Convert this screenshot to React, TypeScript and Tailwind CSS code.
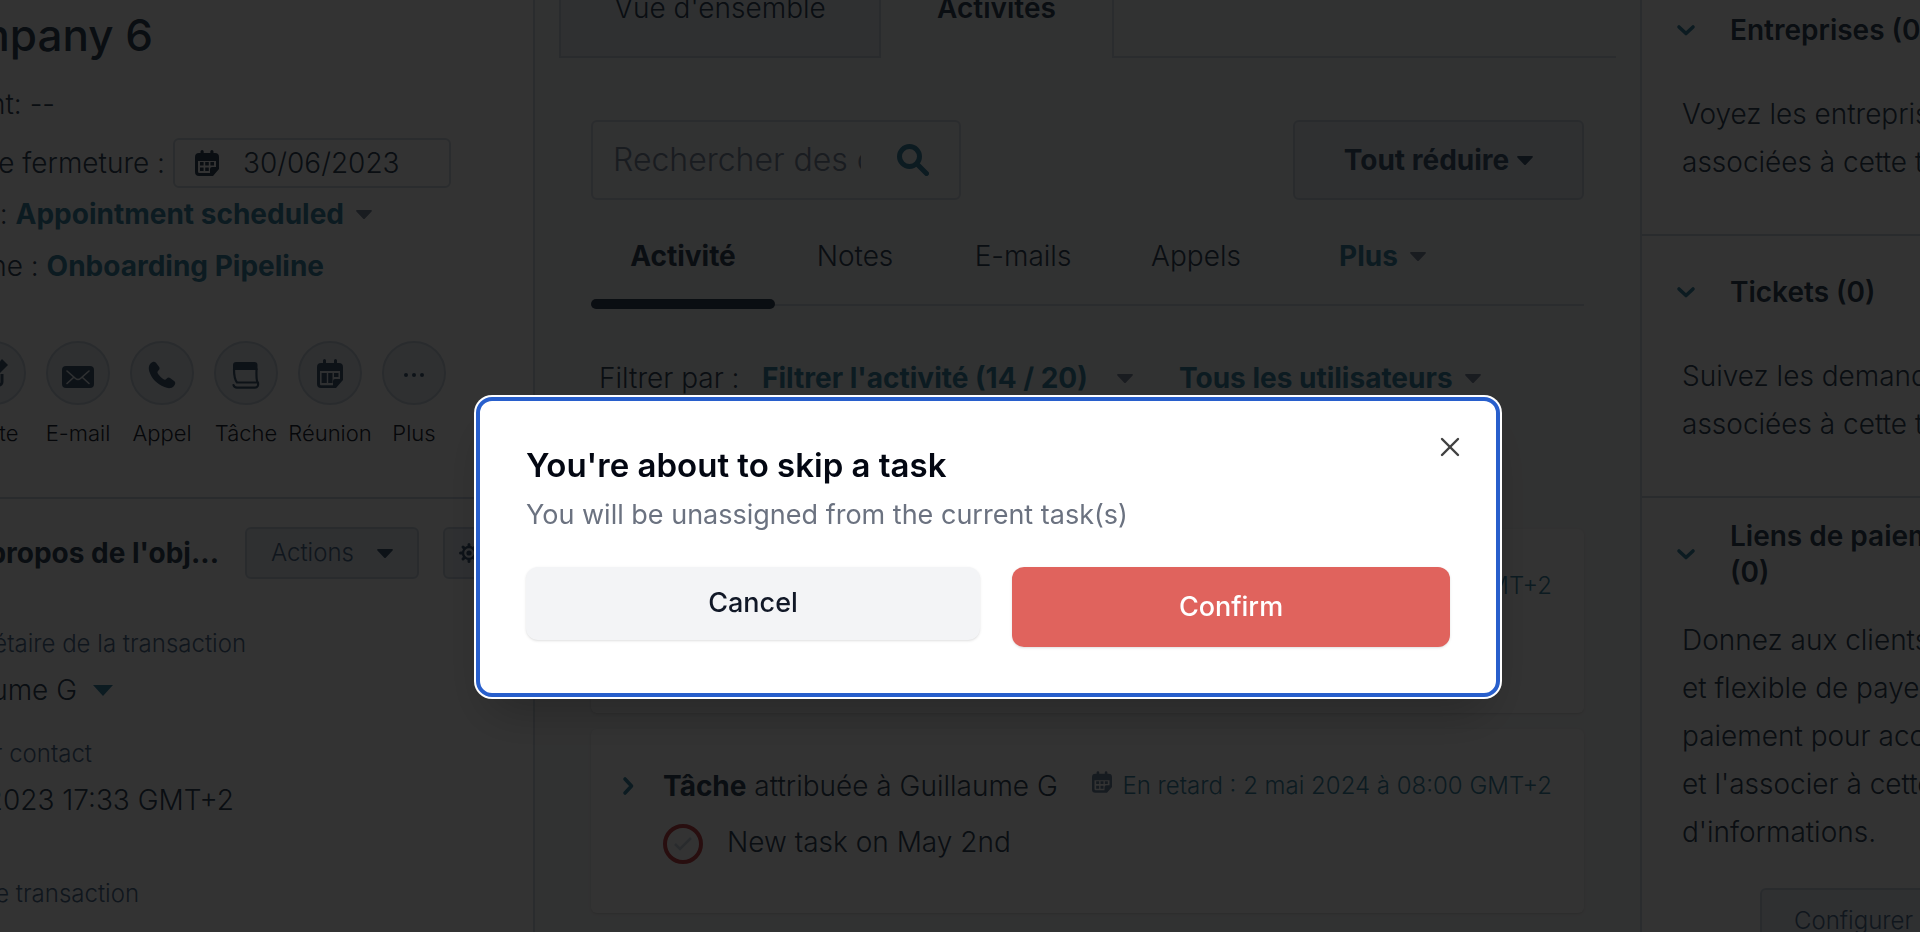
import type { ReactNode } from 'react';
import { X } from 'lucide-react';

function Caret({ className = '' }: { className?: string }) {
  return (
    <svg viewBox="0 0 16 9" className={`h-[9px] w-4 shrink-0 ${className}`} fill="currentColor" aria-hidden="true">
      <path d="M1 0h14c.9 0 1.200.9.6 1.500L9 8.400a1.400 1.400 0 0 1-2 0L.4 1.500C-.2.9.1 0 1 0z" />
    </svg>
  );
}

function Chevron({ right = false }: { right?: boolean }) {
  return (
    <svg
      viewBox="0 0 20 20"
      className={`size-5 shrink-0 text-[#3c87a5] ${right ? '-rotate-90' : ''}`}
      fill="none"
      stroke="currentColor"
      strokeWidth="3.600"
      strokeLinecap="round"
      strokeLinejoin="round"
      aria-hidden="true"
    >
      <path d="M3 7l7 6.500L17 7" />
    </svg>
  );
}

function CalendarDots({ className }: { className: string }) {
  return (
    <svg viewBox="0 0 24 26" className={className} aria-hidden="true">
      <path
        fill="currentColor"
        fillRule="evenodd"
        d="M5.500 1.600a1.600 1.600 0 0 1 3.200 0V3h6.600V1.600a1.600 1.600 0 0 1 3.200 0V3H20a4 4 0 0 1 4 4v12l-6 7H4a4 4 0 0 1-4-4V7a4 4 0 0 1 4-4h1.500zM3 11v10.500A1.500 1.500 0 0 0 4.500 23H15v-4a2 2 0 0 1 2-2h4v-6z"
      />
      <path fill="currentColor" d="M5 12h3.600v3.400H5zM10.200 12h3.600v3.400h-3.600zM15.400 12H19v3.400h-3.600zM5 17.500h3.600V21H5zM10.200 17.500h3.600V21h-3.600z" />
    </svg>
  );
}

function NoteIcon() {
  return (
    <svg viewBox="0 0 32 32" className="size-8" aria-hidden="true">
      <path fill="none" stroke="currentColor" strokeWidth="3" d="M14 6H7a3 3 0 0 0-3 3v16a3 3 0 0 0 3 3h14a3 3 0 0 0 3-3v-8" />
      <path fill="currentColor" d="M24 2l6 6-13 13-7 2 2-8z" />
    </svg>
  );
}

function MailIcon() {
  return (
    <svg viewBox="0 0 32 22" className="mt-2 h-[22px] w-8" aria-hidden="true">
      <rect width="32" height="22" rx="4" fill="currentColor" />
      <path d="M5 5l8.500 7.500a4 4 0 0 0 5 0L27 5M5 17.500l6.500-6M27 17.500l-6.500-6" fill="none" stroke="#eaf0f6" strokeWidth="1.600" strokeLinecap="round" />
    </svg>
  );
}

function PhoneIcon() {
  return (
    <svg viewBox="0 0 28 28" className="mt-1 size-7" aria-hidden="true">
      <path
        fill="currentColor"
        d="M2.500 2.600C4.500.6 6.500.2 8 1.800l3 4c1 1.500.7 2.600-.6 3.800-1.400 1.300-1.200 2 .1 3.900 1.300 1.900 2.900 3.400 4.600 4.500 1.600 1 2.300 1 3.400-.2 1.300-1.400 2.400-1.600 3.900-.6l3.700 2.700c1.700 1.400 1.500 3.100-.1 5-2.200 2.600-5.600 2.900-9.600 1.200C8.700 22.900 3.600 17.500 1.300 10.500.3 7.300.7 4.400 2.500 2.600z"
      />
    </svg>
  );
}

function TaskIcon() {
  return (
    <svg viewBox="0 0 28 28" className="mt-1 size-7" fill="none" stroke="currentColor" strokeWidth="2.200" strokeLinejoin="round" aria-hidden="true">
      <path d="M2 8C2 14 3 19 5 21.500h20.500C24 18 24.500 12 24.500 8z" />
      <path d="M1 4a3 3 0 0 1 3-3h18.500a3 3 0 0 1 3 3v5H1z" fill="currentColor" stroke="none" />
      <path d="M1.500 24c.5 2 1.500 2.600 3.500 2.600h18c2.500 0 3.500-2 3-5" strokeLinecap="round" />
    </svg>
  );
}

function MeetingIcon() {
  return (
    <svg viewBox="0 0 26 29" className="h-[29px] w-[26px]" aria-hidden="true">
      <path
        fill="currentColor"
        fillRule="evenodd"
        d="M6 1.500a1.500 1.500 0 0 1 3 0V4h8V1.500a1.500 1.500 0 0 1 3 0V4h2a4 4 0 0 1 4 4v13l-7 8H4a4 4 0 0 1-4-4V8a4 4 0 0 1 4-4h2zM3 12v13c0 .8.5 1.300 1.300 1.300H16V22a2 2 0 0 1 2-2h5v-8z"
      />
      <path fill="currentColor" d="M4.600 14h5.200v10H4.600zM11.200 14h4.300v10h-4.300zM17 14h4.500v4H17z" />
    </svg>
  );
}

function DotsIcon() {
  return (
    <svg viewBox="0 0 22 6" className="mt-1 h-[6px] w-[22px]" fill="currentColor" aria-hidden="true">
      <circle cx="3" cy="3" r="2" />
      <circle cx="11" cy="3" r="2" />
      <circle cx="19" cy="3" r="2" />
    </svg>
  );
}

function GearIcon() {
  return (
    <svg viewBox="0 0 20 20" className="size-5" fill="none" stroke="currentColor" aria-hidden="true">
      <circle cx="10" cy="10" r="6" strokeWidth="2.400" />
      <circle cx="10" cy="10" r="2.600" fill="currentColor" stroke="none" />
      <path strokeWidth="3" strokeLinecap="round" d="M10 1.500v2M10 16.500v2M1.500 10h2M16.500 10h2M4 4l1.400 1.400M14.600 14.600L16 16M4 16l1.400-1.400M14.600 5.400L16 4" />
    </svg>
  );
}

const actions: { label: string; icon: ReactNode }[] = [
  { label: 'Note', icon: <NoteIcon /> },
  { label: 'E-mail', icon: <MailIcon /> },
  { label: 'Appel', icon: <PhoneIcon /> },
  { label: 'Tâche', icon: <TaskIcon /> },
  { label: 'Réunion', icon: <MeetingIcon /> },
  { label: 'Plus', icon: <DotsIcon /> },
];

function LeftPanel() {
  return (
    <aside className="w-[535px] shrink-0 overflow-hidden border-r-2 border-[#d2dae4] bg-white pt-3">
      <div className="flex w-[451px] flex-col items-end whitespace-nowrap">
        <h1 className="mr-[298px] text-[44px] leading-[46px] font-medium">Company 6</h1>
        <p className="mt-7 mr-[396px] leading-9">Montant: --</p>
        <div className="mt-4 flex items-center gap-2">
          <label htmlFor="close-date">Date de fermeture :</label>
          <div className="flex h-[50px] w-[278px] items-center gap-6 rounded-md border-2 border-[#d2dae4] pl-5">
            <CalendarDots className="h-[26px] w-6 shrink-0" />
            <input id="close-date" defaultValue="30/06/2023" className="w-44 outline-none" />
          </div>
        </div>
        <div className="mt-2 mr-[79px] flex h-9 items-center gap-3">
          <span>Phase : <a href="#phase" className="font-bold text-[#3c87a5]">Appointment scheduled</a></span>
          <Caret className="text-[#7c8aa0]" />
        </div>
        <p className="mt-4 mr-[127px] leading-9">
          Pipeline : <a href="#pipeline" className="font-bold text-[#3c87a5]">Onboarding Pipeline</a>
        </p>
      </div>

      <div className="mt-[57px] -ml-12 flex">
        {actions.map((a) => (
          <button key={a.label} className="flex w-[84px] shrink-0 flex-col items-center">
            <span className="flex size-16 items-center justify-center rounded-full border-2 border-[#cbd6e2] bg-[#eaf0f6] text-[#425b76]">
              {a.icon}
            </span>
            <span className="mt-3 text-[22px] leading-8 text-[#1b2733]">{a.label}</span>
          </button>
        ))}
      </div>

      <div className="mt-12 flex items-center border-t-2 border-[#cbd6e2] pt-7">
        <div className="flex w-[219px] shrink-0 justify-end whitespace-nowrap">
          <h2 className="font-bold">À propos de l'obj...</h2>
        </div>
        <button className="ml-[26px] flex h-[52px] w-[174px] shrink-0 items-center justify-between rounded-md border-2 border-[#cbd6e2] bg-[#eaf0f6] px-6 text-2xl text-[#516f90]">
          Actions <Caret className="text-[#425b76]" />
        </button>
        <button aria-label="Paramètres" className="ml-6 flex h-[52px] w-[72px] shrink-0 items-center rounded-md border-2 border-[#cbd6e2] bg-[#eaf0f6] pl-[14px] text-[#425b76]">
          <GearIcon />
        </button>
      </div>

      <dl className="flex w-[246px] flex-col items-end whitespace-nowrap">
        <dt className="mt-[49px] text-2xl leading-8 text-[#516f90]">Propriétaire de la transaction</dt>
        <dd className="mt-3 mr-[133px] flex h-9 items-center gap-4">
          Guillaume G
          <svg viewBox="0 0 20 11" className="h-[11px] w-5 text-[#3c87a5]" fill="currentColor" aria-hidden="true">
            <path d="M0 0h20L10 11z" />
          </svg>
        </dd>
        <dt className="mt-[30px] mr-[154px] text-2xl leading-8 text-[#516f90]">Dernier contact</dt>
        <dd className="mt-3 mr-3 leading-9">30/06/2023 17:33 GMT+2</dd>
        <dt className="mt-[60px] mr-[107px] text-2xl leading-8 text-[#516f90]">Type de transaction</dt>
      </dl>
    </aside>
  );
}

function DueDate() {
  return (
    <a href="#due" className="block text-2xl font-light text-[#3c87a5]">En retard : 2 mai 2024 à 08:00 GMT+2</a>
  );
}

function TaskCard({ children }: { children: ReactNode }) {
  return <article className="h-[184px] rounded-md bg-white pt-[39px] pr-8 pl-[27px] whitespace-nowrap shadow-sm">{children}</article>;
}

function MiddlePanel() {
  return (
    <main className="min-w-0 flex-1 overflow-hidden bg-[#f6f7f8]">
      <div className="mx-6 flex h-[58px] items-stretch">
        <button className="flex w-[322px] items-end justify-center border-x-2 border-b-2 border-[#cbd6e2] bg-[#eaf0f6] pb-[30px] leading-9 font-light">
          Vue d'ensemble
        </button>
        <button className="flex w-[231px] items-end justify-center pb-8 leading-9 font-semibold">Activités</button>
        <div className="flex-1 border-b-2 border-l-2 border-[#d2dae4]" />
      </div>
      <div className="px-14 pt-[62px]">
        <div className="flex items-center justify-between">
          <div className="flex h-20 w-[370px] items-center gap-9 rounded-md border-2 border-[#d2dae4] pr-[30px] pl-5">
            <input aria-label="Rechercher" placeholder="Rechercher des contenus" className="w-[248px] min-w-0 text-[32px] font-light outline-none placeholder:text-[#7c8aa0]" />
            <svg viewBox="0 0 32 32" className="size-8 shrink-0 text-[#3c87a5]" fill="none" stroke="currentColor" strokeLinecap="round" aria-hidden="true">
              <circle cx="12.500" cy="12.500" r="10" strokeWidth="5" />
              <path d="M20.500 20.500l9 9" strokeWidth="5" />
            </svg>
          </div>
          <button className="flex h-20 w-[291px] items-center justify-center gap-2 rounded-md border-2 border-[#cbd6e2] bg-[#eaf0f6] font-bold text-[#425b76]">
            Tout réduire <Caret />
          </button>
        </div>

        <nav className="flex border-b-2 border-[#d2dae4]">
          <button className="relative h-[104px] w-[184px] pt-2 font-bold">
            Activité
            <span className="absolute inset-x-0 -bottom-[5px] h-[10px] rounded-full bg-[#33475b]" />
          </button>
          <button className="w-40 pt-2">Notes</button>
          <button className="w-[176px] pt-2">E-mails</button>
          <button className="w-[170px] pt-2">Appels</button>
          <button className="ml-[58px] flex items-center gap-3 pt-2 font-bold text-[#3c87a5]">
            Plus <Caret className="text-[#7c8aa0]" />
          </button>
        </nav>

        <div className="mt-[54px] flex h-9 items-center pl-2 whitespace-nowrap">
          <span className="w-[163px]">Filtrer par :</span>
          <button className="mr-[46px] flex w-[371px] items-center justify-between font-bold text-[#3c87a5]">
            Filtrer l'activité (14 / 20) <Caret className="text-[#7c8aa0]" />
          </button>
          <button className="flex items-center gap-3 font-bold text-[#3c87a5]">
            Tous les utilisateurs <Caret className="text-[#7c8aa0]" />
          </button>
        </div>

        <div className="mt-[133px] flex flex-col gap-4">
          <TaskCard>
            <div className="flex h-9 items-center justify-end">
              <DueDate />
            </div>
          </TaskCard>
          <TaskCard>
            <div className="flex h-9 items-center">
              <Chevron right />
              <p className="ml-[25px]"><b className="font-bold">Tâche</b> attribuée à Guillaume G</p>
              <CalendarDots className="mb-2 ml-auto h-[22px] w-5 text-[#7086a0]" />
              <div className="ml-[10px]">
                <DueDate />
              </div>
            </div>
            <div className="mt-5 ml-[45px] flex h-10 items-center gap-6">
              <button aria-label="Terminer la tâche" className="flex size-10 items-center justify-center rounded-full border-4 border-[#c6484c]">
                <svg viewBox="0 0 20 16" className="h-4 w-5" fill="none" stroke="#cbd6e2" strokeWidth="2.500" aria-hidden="true">
                  <path d="M2 8l5 5L18 2" />
                </svg>
              </button>
              <span className="mb-1">New task on May 2nd</span>
            </div>
          </TaskCard>
        </div>
      </div>
    </main>
  );
}

const sections = [
  { title: ['Entreprises (0)'], lines: ['Voyez les entreprises', 'associées à cette transaction.'] },
  { title: ['Tickets (0)'], lines: ['Suivez les demandes', 'associées à cette transaction.'] },
  {
    title: ['Liens de paiement', '(0)'],
    lines: ['Donnez aux clients', 'et flexible de payer', 'paiement pour accepter', "et l'associer à cette", "d'informations."],
    action: 'Configurer les paiements',
  },
];

function RightPanel() {
  return (
    <aside className="w-[280px] shrink-0 overflow-hidden border-l-2 border-[#d2dae4] bg-white">
      <div className="-mt-[26px] whitespace-nowrap">
        {sections.map((s) => (
          <section key={s.title[0]} className="border-b-2 border-[#cbd6e2] pb-12">
            <header className="flex items-center gap-[34px] pt-5 pl-[34px]">
              <Chevron />
              <h2 className="flex min-h-[72px] flex-col justify-center leading-9 font-semibold">
                {s.title.map((t) => <span key={t} className="block">{t}</span>)}
              </h2>
            </header>
            <p className={`pl-10 leading-[48px] ${s.action ? 'pt-[26px]' : 'pt-6'}`}>
              {s.lines.map((l) => <span key={l} className="block">{l}</span>)}
            </p>
            {s.action && (
              <button className="mt-8 ml-[118px] h-[66px] rounded-md border-2 border-[#cbd6e2] bg-[#eaf0f6] px-8 text-2xl text-[#516f90]">
                {s.action}
              </button>
            )}
          </section>
        ))}
      </div>
    </aside>
  );
}

function SkipDialog() {
  return (
    <div className="fixed inset-0 flex items-center justify-center bg-black/80 pt-[162px] pl-14">
      <div
        role="dialog"
        aria-modal="true"
        aria-labelledby="skip-title"
        className="relative w-full max-w-5xl rounded-2xl border-4 border-[#285fcc] bg-white px-[46px] pt-11 pb-[46px] text-[27px] font-normal shadow-2xl ring-2 ring-white"
      >
        <h2 id="skip-title" className="text-[33px] leading-10 font-semibold text-[#030712]">You're about to skip a task</h2>
        <p className="mt-3 leading-9 text-[#6b7280]">You will be unassigned from the current task(s)</p>
        <div className="mt-[34px] grid grid-cols-[454fr_438fr] items-start gap-8">
          <button className="h-[73px] rounded-xl bg-[#f3f4f6] font-medium text-[#111827] shadow-sm">Cancel</button>
          <button className="h-20 rounded-xl bg-[#e0635d] font-medium text-white shadow-sm">Confirm</button>
        </div>
        <button aria-label="Close" className="absolute top-[30px] right-[30px] flex size-8 items-center justify-center text-[#404040]">
          <X className="size-8" strokeWidth={1.800} />
        </button>
      </div>
    </div>
  );
}

export default function App() {
  return (
    <div className="flex h-screen overflow-hidden bg-white font-['Inter',sans-serif] text-[28px] font-[350] text-[#33475b]">
      <LeftPanel />
      <MiddlePanel />
      <RightPanel />
      <SkipDialog />
    </div>
  );
}
